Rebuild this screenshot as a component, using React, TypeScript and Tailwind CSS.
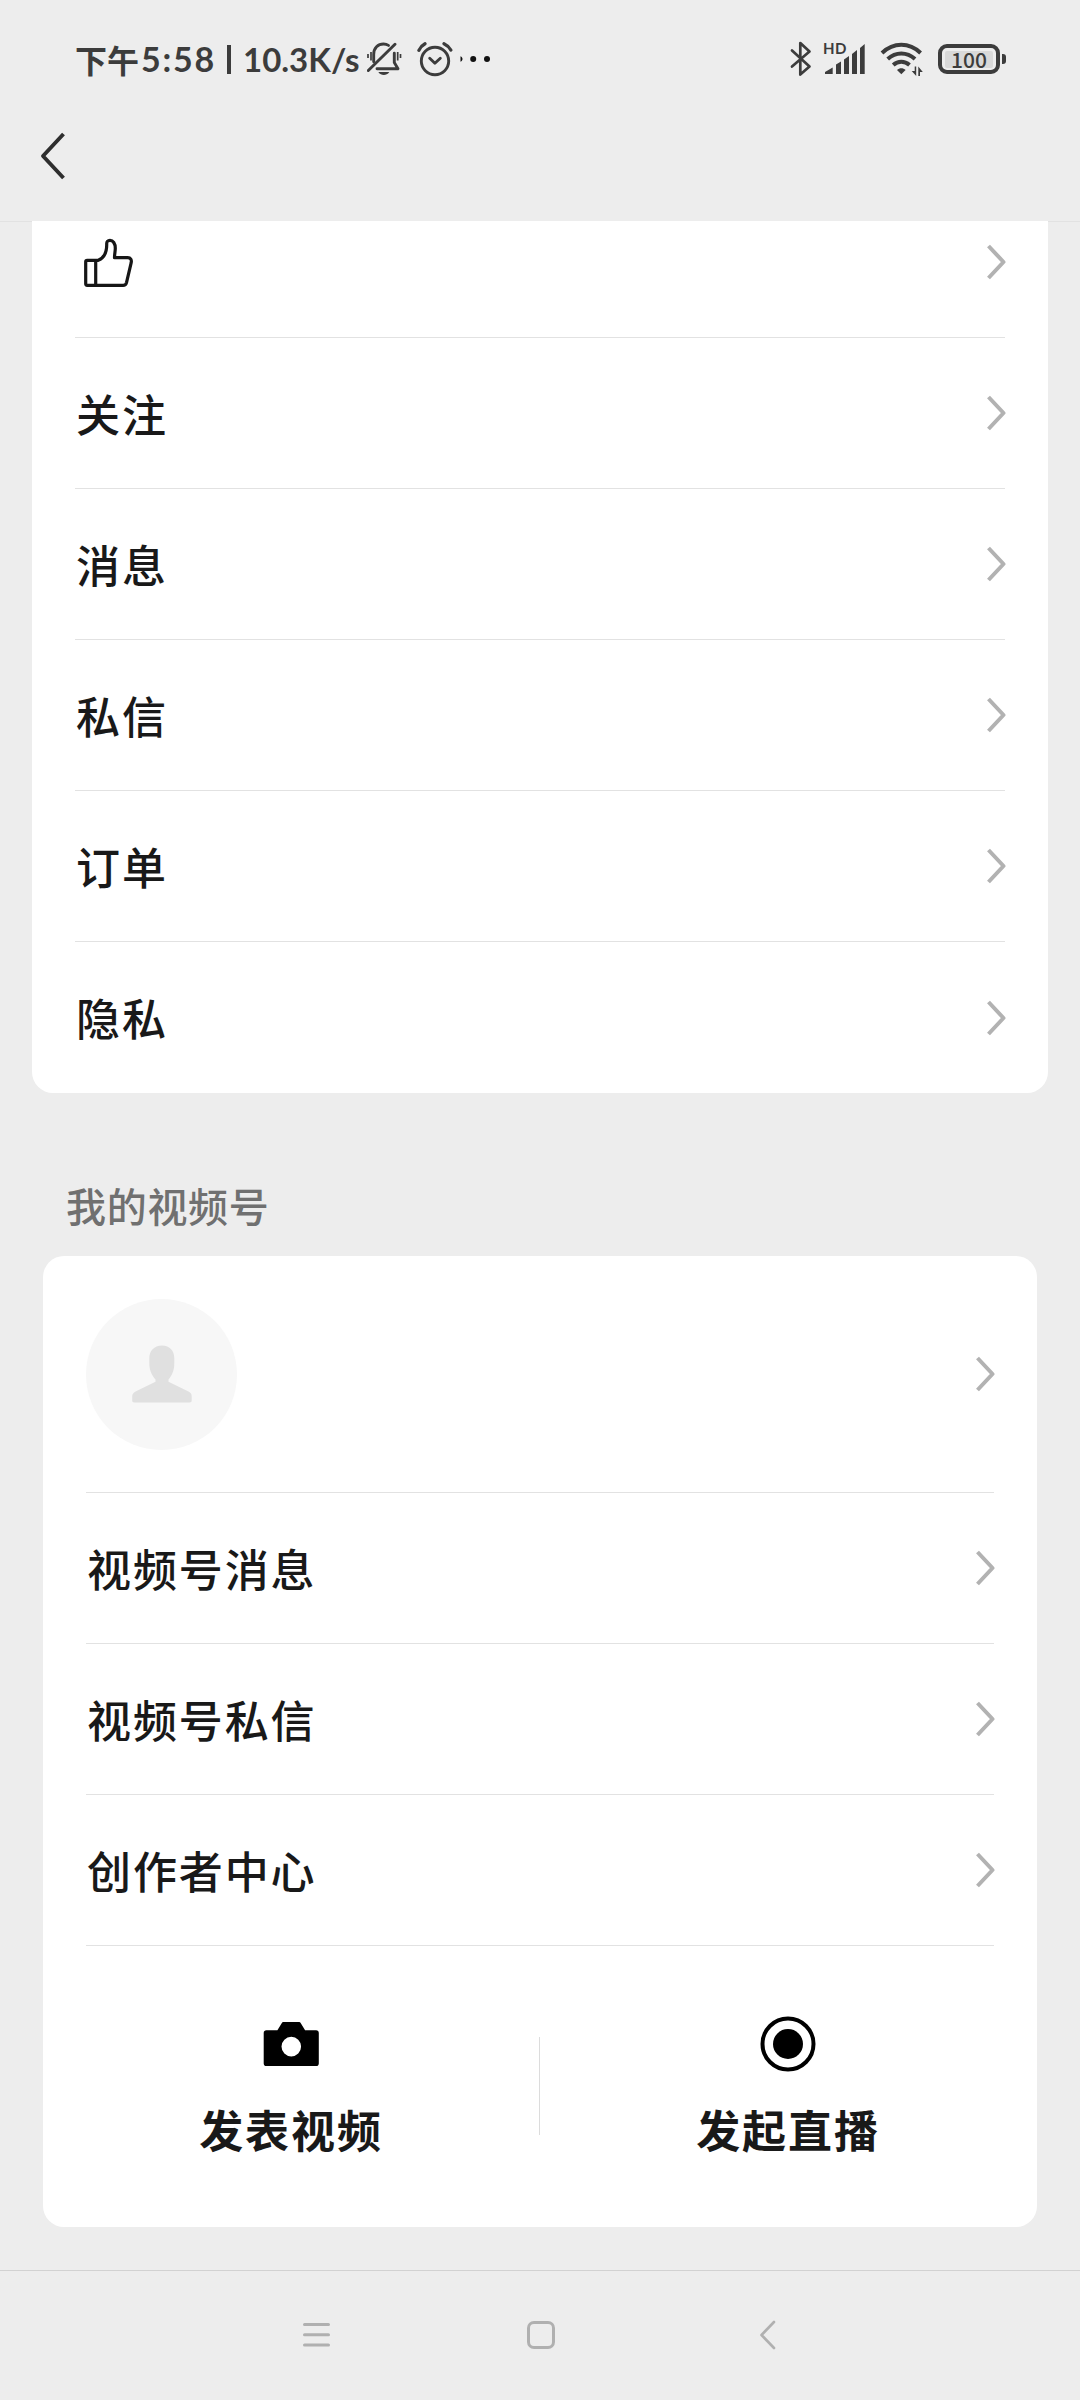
import type { ReactNode } from 'react';
import clsx from 'clsx';

// ─── Icons ────────────────────────────────────────────────────────────────────

function MutedBellIcon() {
  return (
    <svg width="35" height="34" viewBox="0 0 35 34" fill="none" stroke="#3c3c3c" strokeWidth="2.9" strokeLinecap="round">
      <path d="M6.7 19.7V12.5C6.7 6 11 2 16.5 2c2 0 3.6.5 5 1.4" />
      <path d="M27.3 11.3V20.5L31 26.7H10" strokeLinejoin="round" />
      <path d="M1.3 28.5 28 2.2" />
      <path d="M11.300 30h11c-1.500 2.200-3.400 3-5.500 3s-4-.8-5.500-3z" fill="#3c3c3c" stroke="none" />
      <path d="M1 12v4M4 10v8.500M30.700 10v8.500M33.500 12v4" strokeWidth="1.700" strokeLinecap="butt" />
    </svg>
  );
}

function AlarmIcon() {
  return (
    <svg width="36" height="36" viewBox="0 0 36 36" fill="none" stroke="#3c3c3c" strokeWidth="2.9" strokeLinecap="round" strokeLinejoin="round">
      <circle cx="18" cy="20" r="13.7" />
      <path d="m12.700 17.200 5.200 5 5.400-5" />
      <path d="M1.900 9.300C3.200 6.400 5.200 4.200 8 2.700M27 2.700c2.800 1.300 5.300 3.700 6.800 6.300" strokeWidth="3.300" />
    </svg>
  );
}

function MoreDots() {
  return (
    <svg width="32" height="8" viewBox="0 0 32 8" fill="#111">
      <path d="M1.500 1.200c1.400.6 2 1.600 2 2.800s-.6 2.200-2 2.800z" />
      <circle cx="14.200" cy="4" r="3" />
      <circle cx="28" cy="4" r="3" />
    </svg>
  );
}

function BluetoothIcon() {
  return (
    <svg width="22" height="36" viewBox="0 0 22 36" fill="none" stroke="#3c3c3c" strokeWidth="2.700" strokeLinecap="round" strokeLinejoin="round">
      <path d="M2 9.500 19.500 25.500 10.300 33.500V2L19.500 10.500 2 25.500" />
    </svg>
  );
}

function SignalIcon() {
  return (
    <svg width="42" height="34" viewBox="0 0 42 34" fill="#3c3c3c">
      <path d="M1 32v-2l7.700-4.500V32z" />
      <path d="M12 32V22.500l5-3V32zM20 32V17.500l5-3.500V32zM28 32V12l5-4v24zM36 32V6l4.700-4v30z" />
    </svg>
  );
}

function WifiIcon() {
  return (
    <svg width="44" height="36" viewBox="0 0 44 36" fill="none" stroke="#3c3c3c" strokeWidth="4">
      <path d="M2 12C7.500 6.800 14 3.800 21.300 3.800s13.900 3 19.300 8.200" />
      <path d="M7.700 18c4-3.700 8.500-5.600 13.600-5.600S31 14.300 35 18" />
      <path d="M13.200 24c2.400-2.100 5.100-3.200 8.100-3.200s5.800 1.100 8.200 3.200" />
      <path d="M17 29c2.500-2.300 6.100-2.300 8.600 0l-4.300 4.200z" fill="#3c3c3c" stroke="none" />
      <path d="M36.200 25.500V35l-4.500-5h3v-4.500zM38.300 35V25.500l4.500 5.500h-2.800v4z" fill="#3c3c3c" stroke="none" />
    </svg>
  );
}

function BatteryIcon() {
  return (
    <div className="flex items-center gap-[2px]">
      <div className="flex h-[30px] w-[62px] items-center justify-center rounded-[9px] border-4 border-[#3c3c3c]">
        <span className="flex h-[17px] w-12 items-center justify-center rounded-[2px] bg-[#d9d9d9] text-[21px] leading-none font-medium text-[#3c3c3c]">
          100
        </span>
      </div>
      <span className="h-[10px] w-1 rounded-r-[3px] bg-[#3c3c3c]" />
    </div>
  );
}

function BackIcon() {
  return (
    <svg width="26" height="48" viewBox="0 0 26 48" fill="none" stroke="#2e2e2e" strokeWidth="3.900" strokeLinejoin="round">
      <path d="M23.500 2 3 24l20.500 22" />
    </svg>
  );
}

function ThumbIcon() {
  return (
    <svg width="51" height="50" viewBox="0 0 51 50" fill="none" stroke="#161616" strokeWidth="3.200" strokeLinejoin="round">
      <path d="M12.700 22.300H4.200c-1 0-1.500.5-1.500 1.500v22c0 1 .5 1.500 1.500 1.500H40c2 0 3-.8 3.500-2.700l4.700-19.900c.6-3-.5-5-3.500-5H31.500c0-3.500.8-6.500.8-9.400C32.300 5.500 30 2.300 27 2.300c-2.200 0-3.400 1.500-3.300 3.700.2 8-3 14-8.400 16.300z" />
      <path d="M12.700 22.300v25" />
    </svg>
  );
}

function ChevronRight() {
  return (
    <svg className="-mr-px" width="20" height="36" viewBox="0 0 20 36" fill="none" stroke="#b2b2b2" strokeWidth="4" strokeLinejoin="round">
      <path d="M2.500 2 17.500 18 2.500 34" />
    </svg>
  );
}

function PersonIcon() {
  return (
    <svg width="60" height="58" viewBox="0 0 60 58" fill="#e0e0e0">
      <path d="M30 .5C22 .5 17.300 6 17.300 13.500V18c0 7.500 2.700 12.500 6.200 16.500v2.200L4 46.200C1.500 47.400.2 49 .2 51.500v4c0 1.300.7 2 2 2h55.500c1.300 0 2-.7 2-2v-4c0-2.500-.8-3.800-3.200-5L36.500 36.700v-2.200c3.500-4 5.800-9 5.800-16.500v-4.500C42.300 6 38 .5 30 .5z" />
    </svg>
  );
}

function CameraIcon() {
  return (
    <svg width="56" height="56" viewBox="-0.500 -6 56 56" fill="#000">
      <path
        fillRule="evenodd"
        d="M19.500 0h16.300c.5 0 .9.200 1.200.7l4.600 7.600h11c1.600 0 2.700 1 2.700 2.600v30.500c0 1.600-1.100 2.600-2.700 2.600H2.900C1.300 44 .2 43 .2 41.400V10.900c0-1.600 1.100-2.600 2.700-2.600h11l4.600-7.600c.3-.5.600-.7 1-.7zM27.800 14.800a9.800 9.800 0 1 0 0 19.600 9.800 9.800 0 0 0 0-19.600z"
      />
    </svg>
  );
}

function LiveIcon() {
  return (
    <svg width="56" height="56" viewBox="0 0 56 56" fill="none">
      <circle cx="28" cy="28" r="25.500" stroke="#000" strokeWidth="4" />
      <circle cx="28" cy="28" r="15" fill="#000" />
    </svg>
  );
}

// ─── Rows ─────────────────────────────────────────────────────────────────────

const followRows = ['关注', '消息', '私信', '订单', '隐私'];
const channelRows = ['视频号消息', '视频号私信', '创作者中心'];

function Row({ children, last = false, className = 'h-[151px]' }: { children: ReactNode; last?: boolean; className?: string }) {
  return (
    <div className={clsx('flex items-center justify-between', className, !last && 'border-b border-[#e2e2e2]')}>
      {children}
      <ChevronRight />
    </div>
  );
}

function RowLabel({ text }: { text: string }) {
  return <span className="pb-px pl-px text-[44px] leading-[60px] font-medium tracking-[1.900px] text-[#191919]">{text}</span>;
}

function Action({ icon, label }: { icon: ReactNode; label: string }) {
  return (
    <div className="flex flex-1 flex-col items-center pt-[70px]">
      {icon}
      <span className="mt-[25px] text-[44px] leading-[64px] font-bold tracking-[1.900px] text-[#191919]">{label}</span>
    </div>
  );
}

// ─── App ──────────────────────────────────────────────────────────────────────

function App() {
  return (
    <div className="flex h-[2400px] w-[1080px] flex-col overflow-hidden bg-[#ededed] font-['Noto_Sans_CJK_SC',sans-serif]">
      {/* Status bar */}
      <div className="flex h-[118px] shrink-0 items-center justify-between pr-[74px] pl-[75px]">
        <div className="flex items-center text-[#3c3c3c]">
          <span className="w-[66px] text-[32px] leading-none font-bold">下午</span>
          <span className="w-[86px] font-['Lato',sans-serif] text-[34px] leading-none font-bold tracking-[1.800px]">5:58</span>
          <span className="h-[29px] w-1 bg-[#3c3c3c]" />
          <span className="ml-[12px] w-[124px] font-['Lato',sans-serif] text-[33px] leading-none font-bold">10.3K/s</span>
          <MutedBellIcon />
          <div className="ml-[15px]"><AlarmIcon /></div>
          <div className="ml-[6px]"><MoreDots /></div>
        </div>
        <div className="flex items-center">
          <BluetoothIcon />
          <div className="relative ml-[12px]">
            <SignalIcon />
            <span className="absolute -top-[3px] -left-px font-['Lato',sans-serif] text-[15px] leading-[18px] font-bold tracking-[0.500px] text-[#3c3c3c]">
              HD
            </span>
          </div>
          <div className="ml-[14px]"><WifiIcon /></div>
          <div className="ml-[14px]"><BatteryIcon /></div>
        </div>
      </div>

      {/* Title bar */}
      <div className="flex h-[103px] shrink-0 items-start pt-[14px] pl-[40px]">
        <BackIcon />
      </div>

      <main className="flex h-[2049px] shrink-0 flex-col border-t border-[#e2e2e2]">
        <section className="mx-8 -mt-px rounded-b-[21px] bg-white px-[43px]">
          <Row className="h-[117px] pb-[34px]">
            <div className="pt-[2px] pl-[8px]"><ThumbIcon /></div>
          </Row>
          {followRows.map((text, i) => (
            <Row key={text} last={i === followRows.length - 1}>
              <RowLabel text={text} />
            </Row>
          ))}
        </section>

        <h2 className="mt-[82px] ml-[66px] h-[81px] text-[40px] leading-[60px] font-medium tracking-[0.700px] text-[#707070]">我的视频号</h2>

        <section className="mx-[43px] rounded-[21px] bg-white">
          <div className="px-[43px]">
            <Row className="h-[237px]">
              <div className="flex size-[151px] items-center justify-center rounded-full bg-[#f7f7f7]">
                <PersonIcon />
              </div>
            </Row>
            {channelRows.map((text) => (
              <Row key={text}>
                <RowLabel text={text} />
              </Row>
            ))}
          </div>
          <div className="flex h-[281px] pr-px">
            <Action icon={<CameraIcon />} label="发表视频" />
            <div className="mt-[91px] h-[98px] w-px bg-[#dcdcdc]" />
            <Action icon={<LiveIcon />} label="发起直播" />
          </div>
        </section>
      </main>

      {/* System navigation */}
      <nav className="flex h-[130px] shrink-0 items-start border-t border-[#d2d2d2] pt-[48px] pl-[302px]">
        <svg width="30" height="32" viewBox="0 0 30 32" stroke="#b0b0b0" strokeWidth="3" strokeLinecap="round">
          <path d="M2.500 5.500h24M2.500 15.700h24M2.500 25.900h24" />
        </svg>
        <svg className="ml-[194px]" width="30" height="32" viewBox="0 0 30 32" fill="none" stroke="#b0b0b0" strokeWidth="3">
          <rect x="2.500" y="3.500" width="25" height="25" rx="5.500" />
        </svg>
        <svg className="ml-[203px]" width="18" height="32" viewBox="0 0 18 32" fill="none" stroke="#b0b0b0" strokeWidth="2.600" strokeLinecap="round" strokeLinejoin="round">
          <path d="M15 3 2.500 16 15 29" />
        </svg>
      </nav>
    </div>
  );
}

export default App;
